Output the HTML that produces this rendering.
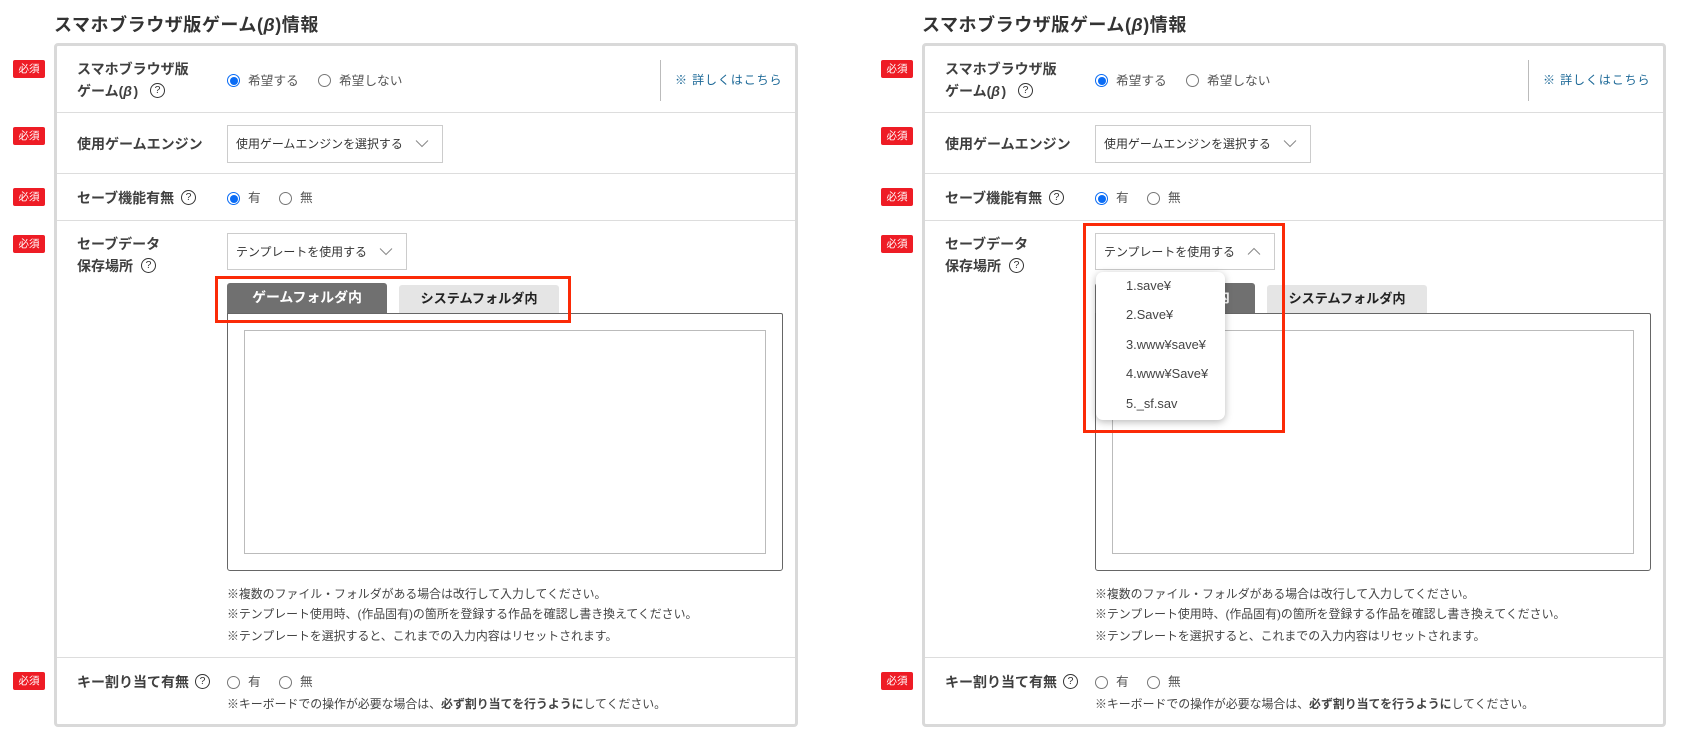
<!DOCTYPE html>
<html lang="ja"><head><meta charset="utf-8">
<style>
html,body{margin:0;padding:0;background:#fff;width:1696px;height:740px;overflow:hidden}
body{font-family:"Liberation Sans","Noto Sans CJK JP",sans-serif;color:#333;position:relative}
.p{position:absolute;left:0;top:0;width:848px;height:740px}
.p.r{left:868px}
.p div,.p span.a{position:absolute}
.t{white-space:nowrap;line-height:20px;height:20px}
.title{left:54px;top:13px;font-size:18px;font-weight:700;line-height:24px;color:#333;white-space:nowrap;letter-spacing:.55px}
.card{left:54px;top:43px;width:738px;height:678px;border:3px solid #d9d9d9;border-radius:4px}
.ln{left:57px;width:738px;height:1px;background:#ddd}
.bd{left:13px;width:32px;height:18px;background:#ee1c25;border-radius:2px;color:#fff;font-size:10.5px;line-height:18px;text-align:center;font-weight:400}
.lb{left:77px;font-size:14px;font-weight:700;color:#3f3f3f}
.lb i{letter-spacing:1.5px}
.q{width:13px;height:13px;border:1.2px solid #333;border-radius:50%;font-size:10.5px;line-height:13px;text-align:center;color:#333;font-weight:400}
.rd{width:11px;height:11px;border:1px solid #777;border-radius:50%;background:#fff}
.rd.on{border:1px solid #0a6cf5}
.rd.on::after{content:"";position:absolute;left:1.5px;top:1.5px;width:8px;height:8px;border-radius:50%;background:#0a6cf5}
.tx{font-size:12.7px;color:#555}
.sel{border:1px solid #ccc;background:#fff;box-sizing:border-box}
.st{font-size:11.95px;color:#333}
.tab1{left:227px;top:283px;width:160px;height:30px;background:#707070;border-radius:3px 3px 0 0;color:#fff;font-size:13.9px;font-weight:700;text-align:center;line-height:29px}
.tab2{left:399px;top:285px;width:160px;height:28px;background:#e5e5e5;border-radius:3px 3px 0 0;color:#222;font-size:13.15px;font-weight:700;text-align:center;line-height:28px}
.box{left:227px;top:313px;width:554px;height:256px;border:1px solid #666;border-radius:0 2px 3px 3px}
.ta{left:244px;top:330px;width:520px;height:222px;border:1px solid #bbb}
.n{left:227px;font-size:11.9px;color:#444}
.red{border:3px solid #fb2a07;box-sizing:border-box}
.dd{left:228px;top:272px;width:129px;height:148px;background:#fff;border-radius:7px;box-shadow:0 2px 8px rgba(0,0,0,.28)}
.it{left:30px;font-size:12.85px;color:#444}
.lk{left:675px;top:70px;font-size:12px;color:#1a6796;letter-spacing:.9px}
</style></head><body>

<section class="p">
<div class="title">スマホブラウザ版ゲーム(<i>β</i>)情報</div>
<div class="card"></div>
<div class="ln" style="top:112px"></div><div class="ln" style="top:173px"></div><div class="ln" style="top:220px"></div><div class="ln" style="top:657px"></div>
<div class="bd" style="top:60px">必須</div><div class="bd" style="top:127px">必須</div><div class="bd" style="top:188px">必須</div><div class="bd" style="top:235px">必須</div><div class="bd" style="top:672px">必須</div>
<div class="t lb" style="top:59px">スマホブラウザ版</div>
<div class="t lb" style="top:81px">ゲーム(<i>β</i>)</div><div class="q" style="left:150px;top:83px">?</div>
<div class="rd on" style="left:227px;top:74px"></div><div class="t tx" style="left:248px;top:71px">希望する</div>
<div class="rd" style="left:318px;top:74px"></div><div class="t tx" style="left:339px;top:71px">希望しない</div>
<div style="left:660px;top:60px;width:1px;height:41px;background:#bbb"></div>
<div class="t lk">※ 詳しくはこちら</div>
<div class="t lb" style="top:134px">使用ゲームエンジン</div>
<div class="sel" style="left:227px;top:125px;width:216px;height:38px"></div>
<div class="t st" style="left:236px;top:134px">使用ゲームエンジンを選択する</div>
<svg style="position:absolute;left:415px;top:139px" width="14" height="9" viewBox="0 0 14 9"><path d="M1 1.5 L7 7.5 L13 1.5" fill="none" stroke="#888" stroke-width="1"/></svg>
<div class="t lb" style="top:188px">セーブ機能有無</div><div class="q" style="left:181px;top:190px">?</div>
<div class="rd on" style="left:227px;top:192px"></div><div class="t tx" style="left:248px;top:188px">有</div>
<div class="rd" style="left:279px;top:192px"></div><div class="t tx" style="left:300px;top:188px">無</div>
<div class="t lb" style="top:234px">セーブデータ</div>
<div class="t lb" style="top:256px">保存場所</div><div class="q" style="left:141px;top:258px">?</div>
<div class="sel" style="left:227px;top:233px;width:180px;height:37px"></div>
<div class="t st" style="left:236px;top:242px">テンプレートを使用する</div>
<svg style="position:absolute;left:379px;top:247px" width="14" height="9" viewBox="0 0 14 9"><path d="M1 1.5 L7 7.5 L13 1.5" fill="none" stroke="#888" stroke-width="1"/></svg>
<div class="box"></div>
<div class="tab1">ゲームフォルダ内</div><div class="tab2">システムフォルダ内</div>
<div class="ta"></div>
<div class="t n" style="top:584px">※複数のファイル・フォルダがある場合は改行して入力してください。</div>
<div class="t n" style="top:604px">※テンプレート使用時、(作品固有)の箇所を登録する作品を確認し書き換えてください。</div>
<div class="t n" style="top:626px">※テンプレートを選択すると、これまでの入力内容はリセットされます。</div>
<div class="t lb" style="top:672px">キー割り当て有無</div><div class="q" style="left:195px;top:674px">?</div>
<div class="rd" style="left:227px;top:676px"></div><div class="t tx" style="left:248px;top:672px">有</div>
<div class="rd" style="left:279px;top:676px"></div><div class="t tx" style="left:300px;top:672px">無</div>
<div class="t n" style="top:694px">※キーボードでの操作が必要な場合は、<b>必ず割り当てを行うように</b>してください。</div>
<div class="red" style="left:215px;top:276px;width:356px;height:47px"></div>
</section>

<section class="p r">
<div class="title">スマホブラウザ版ゲーム(<i>β</i>)情報</div>
<div class="card"></div>
<div class="ln" style="top:112px"></div><div class="ln" style="top:173px"></div><div class="ln" style="top:220px"></div><div class="ln" style="top:657px"></div>
<div class="bd" style="top:60px">必須</div><div class="bd" style="top:127px">必須</div><div class="bd" style="top:188px">必須</div><div class="bd" style="top:235px">必須</div><div class="bd" style="top:672px">必須</div>
<div class="t lb" style="top:59px">スマホブラウザ版</div>
<div class="t lb" style="top:81px">ゲーム(<i>β</i>)</div><div class="q" style="left:150px;top:83px">?</div>
<div class="rd on" style="left:227px;top:74px"></div><div class="t tx" style="left:248px;top:71px">希望する</div>
<div class="rd" style="left:318px;top:74px"></div><div class="t tx" style="left:339px;top:71px">希望しない</div>
<div style="left:660px;top:60px;width:1px;height:41px;background:#bbb"></div>
<div class="t lk">※ 詳しくはこちら</div>
<div class="t lb" style="top:134px">使用ゲームエンジン</div>
<div class="sel" style="left:227px;top:125px;width:216px;height:38px"></div>
<div class="t st" style="left:236px;top:134px">使用ゲームエンジンを選択する</div>
<svg style="position:absolute;left:415px;top:139px" width="14" height="9" viewBox="0 0 14 9"><path d="M1 1.5 L7 7.5 L13 1.5" fill="none" stroke="#888" stroke-width="1"/></svg>
<div class="t lb" style="top:188px">セーブ機能有無</div><div class="q" style="left:181px;top:190px">?</div>
<div class="rd on" style="left:227px;top:192px"></div><div class="t tx" style="left:248px;top:188px">有</div>
<div class="rd" style="left:279px;top:192px"></div><div class="t tx" style="left:300px;top:188px">無</div>
<div class="t lb" style="top:234px">セーブデータ</div>
<div class="t lb" style="top:256px">保存場所</div><div class="q" style="left:141px;top:258px">?</div>
<div class="sel" style="left:227px;top:233px;width:180px;height:37px"></div>
<div class="t st" style="left:236px;top:242px">テンプレートを使用する</div>
<svg style="position:absolute;left:379px;top:247px" width="14" height="9" viewBox="0 0 14 9"><path d="M1 7.5 L7 1.5 L13 7.5" fill="none" stroke="#888" stroke-width="1"/></svg>
<div class="box"></div>
<div class="tab1">ゲームフォルダ内</div><div class="tab2">システムフォルダ内</div>
<div class="ta"></div>
<div class="t n" style="top:584px">※複数のファイル・フォルダがある場合は改行して入力してください。</div>
<div class="t n" style="top:604px">※テンプレート使用時、(作品固有)の箇所を登録する作品を確認し書き換えてください。</div>
<div class="t n" style="top:626px">※テンプレートを選択すると、これまでの入力内容はリセットされます。</div>
<div class="t lb" style="top:672px">キー割り当て有無</div><div class="q" style="left:195px;top:674px">?</div>
<div class="rd" style="left:227px;top:676px"></div><div class="t tx" style="left:248px;top:672px">有</div>
<div class="rd" style="left:279px;top:676px"></div><div class="t tx" style="left:300px;top:672px">無</div>
<div class="t n" style="top:694px">※キーボードでの操作が必要な場合は、<b>必ず割り当てを行うように</b>してください。</div>
<div class="dd">
<div class="t it" style="top:4px">1.save¥</div>
<div class="t it" style="top:33px">2.Save¥</div>
<div class="t it" style="top:63px">3.www¥save¥</div>
<div class="t it" style="top:92px">4.www¥Save¥</div>
<div class="t it" style="top:122px">5._sf.sav</div>
</div>
<div class="red" style="left:215px;top:223px;width:202px;height:210px"></div>
</section>
</body></html>
